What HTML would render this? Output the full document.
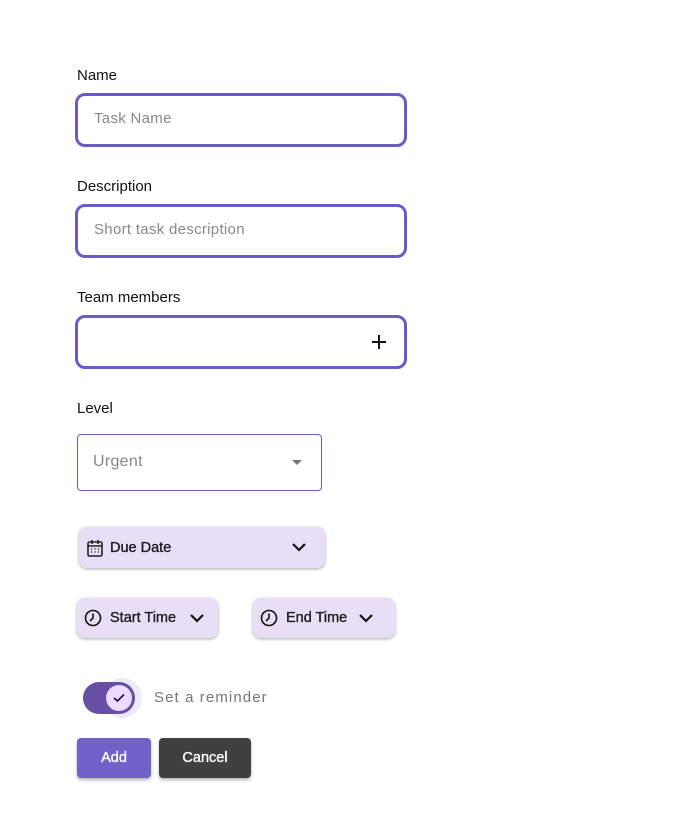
<!DOCTYPE html>
<html><head><style>
*{margin:0;padding:0;box-sizing:border-box}
body{width:687px;height:829px;background:#fff;font-family:"Liberation Sans",sans-serif;position:relative;overflow:hidden}
.a{position:absolute}
.lbl{font-size:15px;color:#111;left:77px}
.inp{left:75px;width:332px;height:54px;border:3px solid #6a5cc8;border-radius:10px;}
.ph{position:absolute;left:16px;top:14px;font-size:15px;color:#888;letter-spacing:0.3px}
.chip{background:#e8def6;border-radius:8px;box-shadow:0 1px 3px rgba(0,0,0,.35);font-size:14.5px;color:#1c1b1f;display:flex;align-items:center;-webkit-text-stroke:0.35px #1c1b1f}
.btn{border-radius:4px;color:#fff;font-size:14.5px;display:flex;align-items:center;justify-content:center;box-shadow:0 2px 3px rgba(0,0,0,.3);-webkit-text-stroke:0.35px #fff}
</style></head><body>
<div class="a lbl" style="top:67px">Name</div>
<div class="a inp" style="top:93px"><span class="ph">Task Name</span></div>
<div class="a lbl" style="top:178px">Description</div>
<div class="a inp" style="top:204px"><span class="ph">Short task description</span></div>
<div class="a lbl" style="top:289px">Team members</div>
<div class="a inp" style="top:315px"><svg class="a" style="left:293px;top:16px" width="16" height="16" viewBox="0 0 16 16"><path d="M8 1v14M1 8h14" stroke="#111" stroke-width="2"/></svg></div>
<div class="a lbl" style="top:400px">Level</div>
<div class="a" style="left:77px;top:434px;width:245px;height:57px;border:1px solid #6a5cc8;border-radius:4px"><span class="ph" style="top:18px;left:15px;font-size:16px">Urgent</span><svg class="a" style="left:214px;top:25px" width="10" height="6"><path d="M0 0h10L5 5z" fill="#777"/></svg></div>
<div class="a chip" style="left:79px;top:527px;width:246px;height:41px">
<svg style="margin-left:8px" width="16" height="18" viewBox="0 0 16 18"><rect x="1" y="3" width="14" height="14" rx="1.5" fill="none" stroke="#222" stroke-width="1.6"/><path d="M1 7h14M5 1v4M11 1v4" stroke="#222" stroke-width="1.6"/><path d="M4 10h1M7.5 10h1M11 10h1M4 13h1M7.5 13h1M11 13h1" stroke="#222" stroke-width="1.4"/></svg>
<span style="margin-left:7px">Due Date</span>
<svg class="a" style="left:212px;top:15px" width="16" height="10"><path d="M2 2l6 6 6-6" fill="none" stroke="#111" stroke-width="2.2"/></svg></div>
<div class="a chip" style="left:77px;top:598px;width:141px;height:40px">
<svg style="margin-left:7px" width="18" height="18" viewBox="0 0 18 18"><circle cx="9" cy="9" r="7.5" fill="none" stroke="#111" stroke-width="1.6"/><path d="M9 4.5V9l-3 3" fill="none" stroke="#111" stroke-width="1.6"/></svg>
<span style="margin-left:8px">Start Time</span>
<svg class="a" style="left:112px;top:15px" width="16" height="10"><path d="M2 2l6 6 6-6" fill="none" stroke="#111" stroke-width="2.2"/></svg></div>
<div class="a chip" style="left:253px;top:598px;width:142px;height:40px">
<svg style="margin-left:7px" width="18" height="18" viewBox="0 0 18 18"><circle cx="9" cy="9" r="7.5" fill="none" stroke="#111" stroke-width="1.6"/><path d="M9 4.5V9l-3 3" fill="none" stroke="#111" stroke-width="1.6"/></svg>
<span style="margin-left:8px">End Time</span>
<svg class="a" style="left:105px;top:15px" width="16" height="10"><path d="M2 2l6 6 6-6" fill="none" stroke="#111" stroke-width="2.2"/></svg></div>
<div class="a" style="left:102px;top:678px;width:40px;height:40px;border-radius:50%;background:#efeaf7"></div>
<div class="a" style="left:83px;top:682px;width:52px;height:32px;border-radius:16px;background:#6750a4"></div>
<div class="a" style="left:106px;top:685px;width:26px;height:26px;border-radius:50%;background:#eaddff"></div>
<svg class="a" style="left:113px;top:693px" width="12" height="10"><path d="M1 5l3.5 3L11 1.5" fill="none" stroke="#21005d" stroke-width="1.6"/></svg>
<div class="a" style="left:154px;top:689px;font-size:15px;color:#777;letter-spacing:1.1px">Set a reminder</div>
<div class="a btn" style="left:77px;top:738px;width:74px;height:40px;background:#6f63c9">Add</div>
<div class="a btn" style="left:159px;top:738px;width:92px;height:40px;background:#404040">Cancel</div>
</body></html>
